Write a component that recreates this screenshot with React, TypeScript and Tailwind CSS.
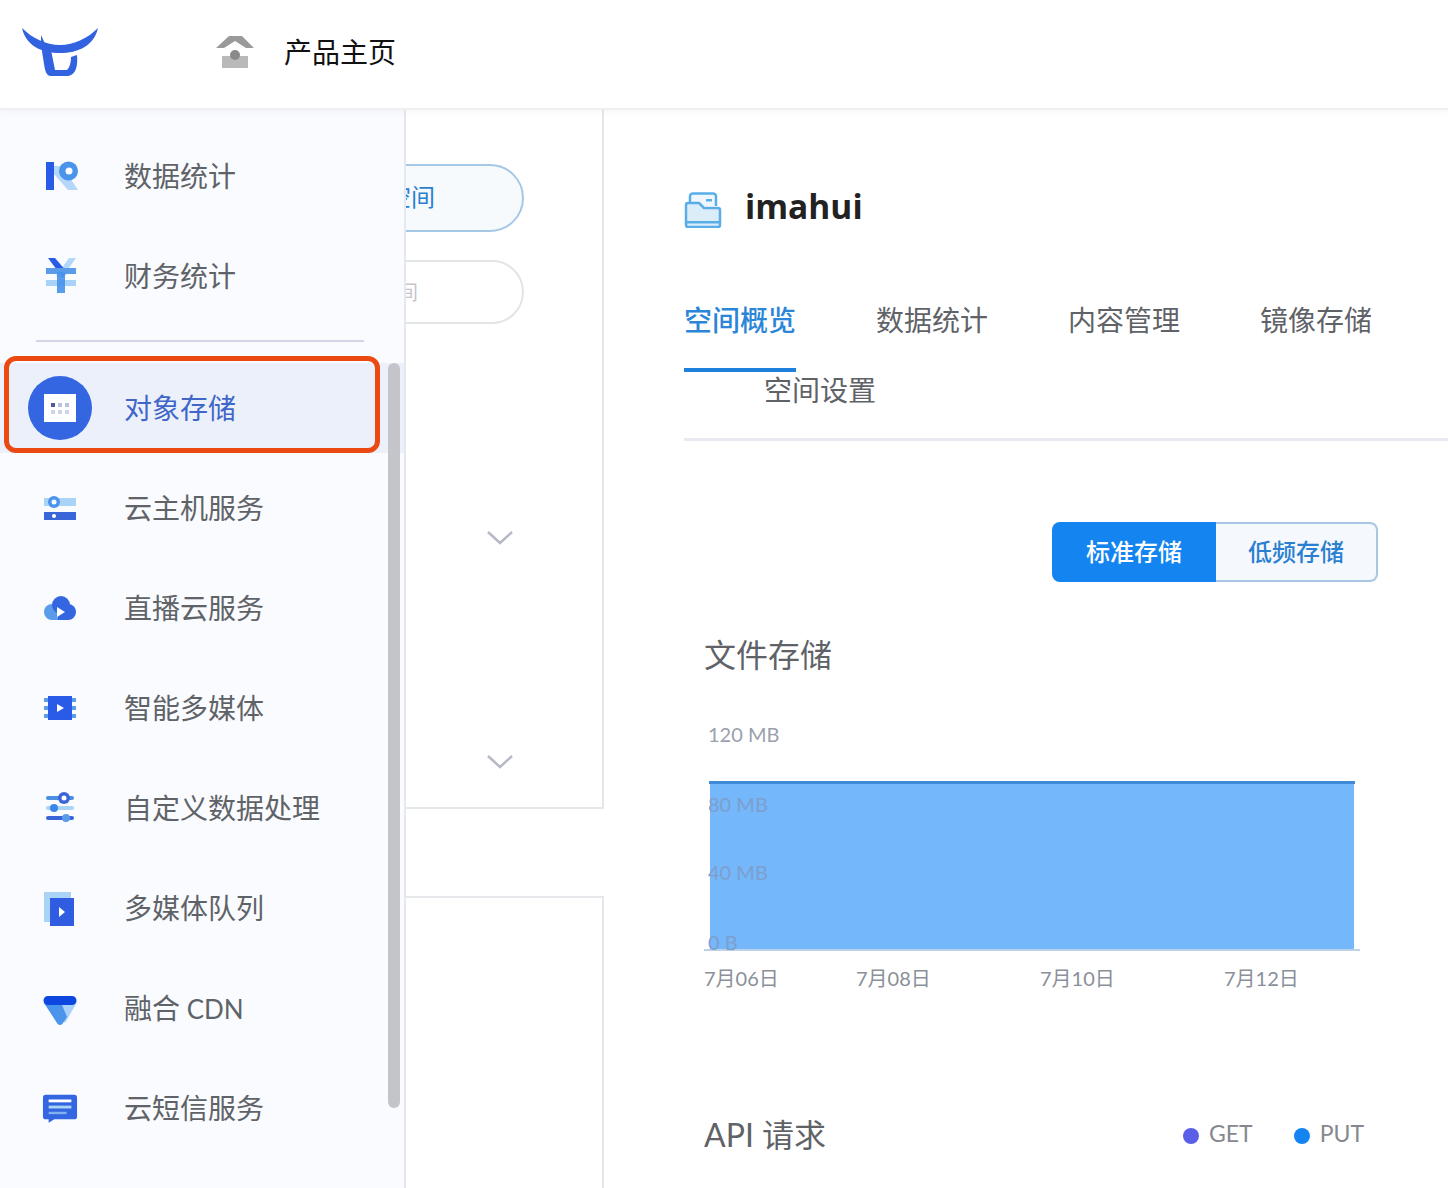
import React from "react";

const FONT = "[font-family:Lato,'Noto_Sans_CJK_SC',sans-serif]";

const Icons: Record<string, React.ReactNode> = {
  stats: (
    <svg width="36" height="36" viewBox="0 0 36 36">
      <path d="M12 8 L20 8 L36 32 L26 32 L12 16 Z" fill="#b5d7fa" />
      <rect x="4" y="4" width="8" height="28" fill="#2a5be8" />
      <circle cx="26.5" cy="13" r="9.5" fill="#4a94ec" />
      <circle cx="27" cy="13" r="3.5" fill="#f9fbfe" />
    </svg>
  ),
  money: (
    <svg width="36" height="36" viewBox="-2 0 36 36">
      <path d="M12 18 L25 0 L32 0 L18 20 Z" fill="#b5d7fa" />
      <path d="M4 0 L11 0 L23 14 L19 20 Z" fill="#2a5be8" />
      <rect x="2" y="10" width="30" height="6" fill="#5a9bea" />
      <rect x="2" y="22" width="30" height="6" fill="#a9d2fa" />
      <rect x="13" y="14" width="8" height="21" fill="#4a94ec" opacity="0.92" />
    </svg>
  ),
  server: (
    <svg width="36" height="36" viewBox="0 0 36 36">
      <rect x="2" y="8" width="32" height="8" fill="#aad4f6" />
      <circle cx="12" cy="12" r="6" fill="#4a94ec" />
      <circle cx="12" cy="12" r="2.5" fill="#f9fbfe" />
      <rect x="2" y="22" width="32" height="8" fill="#3a65d8" />
      <circle cx="12" cy="26" r="2" fill="#fff" />
    </svg>
  ),
  live: (
    <svg width="36" height="36" viewBox="0 0 36 36">
      <circle cx="10" cy="22" r="8" fill="#5a9bea" />
      <rect x="10" y="14" width="10" height="16" fill="#5a9bea" />
      <circle cx="19" cy="15" r="9" fill="#3366e0" />
      <circle cx="26" cy="22" r="8" fill="#3366e0" />
      <rect x="16" y="20" width="10" height="10" fill="#3366e0" />
      <path d="M15 17 L23 22 L15 27 Z" fill="#fff" />
    </svg>
  ),
  media: (
    <svg width="36" height="36" viewBox="0 0 36 36">
      <rect x="2" y="8" width="32" height="4" fill="#5a9bea" />
      <rect x="2" y="16" width="32" height="4" fill="#5a9bea" />
      <rect x="2" y="24" width="32" height="4" fill="#5a9bea" />
      <rect x="6" y="6" width="24" height="24" fill="#2a5be8" />
      <path d="M15 14 L22 18 L15 22 Z" fill="#fff" />
    </svg>
  ),
  sliders: (
    <svg width="36" height="36" viewBox="0 0 36 36">
      <rect x="4" y="6" width="28" height="4" rx="2" fill="#4a8fe0" />
      <rect x="4" y="16" width="28" height="4" rx="2" fill="#aad4f6" />
      <rect x="4" y="26" width="28" height="4" rx="2" fill="#3a65d8" />
      <circle cx="22" cy="8" r="6" fill="#3a65d8" />
      <circle cx="22" cy="8" r="2.5" fill="#fff" />
      <circle cx="12" cy="18" r="4" fill="#3b86e6" />
      <circle cx="24" cy="28" r="4" fill="#5a9bea" />
    </svg>
  ),
  queue: (
    <svg width="36" height="36" viewBox="0 0 36 36">
      <rect x="2" y="2" width="27" height="30" fill="#aad4f6" />
      <rect x="8" y="8" width="24" height="28" fill="#2f5ce0" />
      <path d="M17 17 L23 22 L17 27 Z" fill="#fff" />
    </svg>
  ),
  cdn: (
    <svg width="36" height="36" viewBox="0 0 36 36">
      <path d="M8 10 L31 10 C34 10 35 12 34 14 L23 33 Z" fill="#a9d2fa" />
      <path d="M2 13 C2 11 4 10 6 10 L18 10 L25 27 L21 33 C20 35.500 16 35.500 15 33 Z" fill="#4a94ec" />
      <path d="M6 6 L30 6 A4.500 4.500 0 0 1 30 15 L6 15 A4.500 4.500 0 0 1 6 6 Z" fill="#0d47e0" />
    </svg>
  ),
  sms: (
    <svg width="38" height="36" viewBox="0 0 38 36">
      <path d="M4 4 L34 4 A3 3 0 0 1 37 7 L37 27 A3 3 0 0 1 34 30 L13 30 L7 33.500 L7 30 L4 30 A3 3 0 0 1 1 27 L1 7 A3 3 0 0 1 4 4 Z" fill="#3366e0" />
      <rect x="7" y="9" width="24" height="3" fill="#fff" />
      <rect x="7" y="15.500" width="24" height="3" fill="#aad4f6" />
      <rect x="7" y="22" width="19" height="2.500" fill="#7fb2ee" />
    </svg>
  ),
};

function NavItem({ icon, label, extra }: { icon: string; label: string; extra?: string }) {
  return (
    <div className="flex h-[100px] items-center pl-[42px] text-[28px] text-[#5f6368]">
      <div className="flex h-9 w-9 shrink-0 items-center justify-center">{Icons[icon]}</div>
      <span className="ml-[46px]">
        {label}
        {extra ? <span className="text-[26px]"> {extra}</span> : null}
      </span>
    </div>
  );
}

function Chevron() {
  return (
    <svg width="28" height="16" viewBox="0 0 28 16" fill="none" stroke="#b4b9c3" strokeWidth="2.500">
      <path d="M2 2 L14 13 L26 2" />
    </svg>
  );
}

const tabs = ["数据统计", "内容管理", "镜像存储", "空间设置"];

export default function App() {
  return (
    <div className={`flex h-[1188px] w-[1448px] flex-col overflow-hidden bg-white ${FONT}`}>
      <header className="relative z-20 flex h-[110px] shrink-0 items-center border-b-2 border-[#eeeff1] bg-white pl-5 shadow-[0_2px_8px_rgba(0,0,0,0.04)]">
        <svg width="80" height="52" viewBox="0 0 80 52" className="-mt-[4px]">
          <path d="M2 2 C12 12 26 19 40 19 C54 19 68 12 78 2 C74 20 58 27 40 27 C22 27 6 20 2 2 Z" fill="#3362e0" />
          <path d="M21 9 L26 20 L21 20 Z" fill="#3362e0" />
          <path
            d="M21 19 L31 24 L35 44 L47 44 C50 41 51 36 51 31 L57 29 C58 40 56 49 48 50 L31 50 C26 50 25 44 24 38 Z"
            fill="#3362e0"
          />
        </svg>
        <svg width="38" height="34" viewBox="0 0 38 34" className="ml-[116px] -mt-[2px]">
          <rect x="6" y="20" width="26" height="12" fill="#b9b9b9" />
          <path d="M0 12 L13 0 L26 0 L38 12 L30 12 L19 5 L8 12 Z" fill="#9a9a9a" />
          <circle cx="19" cy="19" r="5" fill="#8a8a8a" />
        </svg>
        <span className="ml-[30px] -mt-[4px] text-[28px] text-[#111]">产品主页</span>
      </header>

      <div className="flex min-h-0 flex-1">
        <aside className="relative z-10 w-[406px] shrink-0 border-r-2 border-[#e6e8f0] bg-[#f9fbfe] pt-4">
          <NavItem icon="stats" label="数据统计" />
          <NavItem icon="money" label="财务统计" />
          <div className="mb-[21px] ml-9 mr-10 mt-[14px] h-[2px] bg-[#d2d5e3]" />
          <div className="mb-[5px] flex h-[90px] items-center bg-[#ebf0fb] pl-7 text-[28px] text-[#3f66c8]">
            <div className="flex h-16 w-16 items-center justify-center rounded-full bg-[#3366e0]">
              <div className="grid h-7 w-8 grid-cols-3 content-center justify-items-center gap-y-[3px] bg-white px-[5px]">
                <span className="h-1 w-1 bg-[#4a5aa0]" />
                <span className="h-1 w-1 bg-[#b8c2e0]" />
                <span className="h-1 w-1 bg-[#b8c2e0]" />
                <span className="h-1 w-1 bg-[#ccd4ea]" />
                <span className="h-1 w-1 bg-[#ccd4ea]" />
                <span className="h-1 w-1 bg-[#ccd4ea]" />
              </div>
            </div>
            <span className="ml-8">对象存储</span>
          </div>
          <NavItem icon="server" label="云主机服务" />
          <NavItem icon="live" label="直播云服务" />
          <NavItem icon="media" label="智能多媒体" />
          <NavItem icon="sliders" label="自定义数据处理" />
          <NavItem icon="queue" label="多媒体队列" />
          <NavItem icon="cdn" label="融合" extra="CDN" />
          <NavItem icon="sms" label="云短信服务" />
          <div className="absolute left-[388px] top-[253px] h-[745px] w-3 rounded-full bg-[#c4c5ca]" />
          <div className="absolute left-1 top-[246px] h-[97px] w-[376px] rounded-xl border-[5px] border-[#ea4a12]" />
        </aside>

        <div className="flex w-[198px] shrink-0 flex-col">
          <div className="flex h-[699px] shrink-0 flex-col border-b-2 border-r-2 border-[#e6e7ea]">
            <div className="-ml-[120px] mt-[54px] flex h-[68px] w-[238px] items-center justify-end rounded-full border-2 border-[#a6c8e6] bg-[#f6fafd] pb-[2px] pr-[87px] text-[24px] text-[#2b7fd0]">
              存储空间
            </div>
            <div className="-ml-[120px] mt-7 flex h-16 w-[238px] items-center justify-end rounded-full border-2 border-[#e3e4e8] pr-[104px] text-[20px] text-[#c4c6cc]">
              外部空间
            </div>
            <div className="ml-[80px] mt-[206px]"><Chevron /></div>
            <div className="ml-[80px] mt-[208px]"><Chevron /></div>
          </div>
          <div className="mt-[87px] flex-1 border-r-2 border-t-2 border-[#e6e7ea]" />
        </div>

        <main className="min-w-0 flex-1 pl-20">
          <div className="mt-[74px] flex h-11 items-center">
            <svg width="38" height="36" viewBox="0 0 38 36" className="mt-2">
              <path d="M6 14 L6 4 A3 3 0 0 1 9 1.500 L29 1.500 A3 3 0 0 1 32 4 L32 14" fill="#eef7fd" stroke="#5aaee8" strokeWidth="2.500" />
              <path d="M2 33 L2 13 A2 2 0 0 1 4 11 L15 11 L20 16 L34 16 A2 2 0 0 1 36 18 L36 33 A2 2 0 0 1 34 35 L4 35 A2 2 0 0 1 2 33 Z" fill="#dcedfa" stroke="#5aaee8" strokeWidth="2.500" strokeLinejoin="round" />
              <rect x="2" y="29" width="34" height="2.500" fill="#5aaee8" />
              <rect x="22" y="7" width="6" height="2.500" fill="#5aaee8" />
            </svg>
            <span className="ml-[23px] [font-family:'Open_Sans',sans-serif] text-[33.5px] font-bold text-[#222]">imahui</span>
          </div>

          <div className="mt-[57px] flex flex-wrap border-b-[3px] border-[#e9eaf1] pb-[13px] text-[28px] text-[#5f6368]">
            <div className="relative flex h-[70px] w-28 items-center justify-center font-medium text-[#2b86d8]">
              空间概览
              <div className="absolute -bottom-[17px] left-0 h-1 w-28 bg-[#1f80dc]" />
            </div>
            {tabs.map((t) => (
              <div key={t} className="ml-20 flex h-[70px] w-28 items-center justify-center">
                {t}
              </div>
            ))}
          </div>

          <div className="mt-[81px] flex h-[60px] w-[326px] translate-x-[368px] text-[24px]">
            <div className="flex w-[164px] items-center justify-center rounded-l-lg bg-[#1485f0] font-medium text-white">
              标准存储
            </div>
            <div className="flex flex-1 items-center justify-center rounded-r-lg border-2 border-l-0 border-[#a9c7e2] bg-[#f5f9fd] font-medium text-[#2b7fd0]">
              低频存储
            </div>
          </div>

          <h2 className="ml-5 mt-[50px] text-[32px] leading-[46px] text-[#5f6368]">文件存储</h2>

          <div className="relative ml-5 mt-[42px] h-[216px] w-[656px] text-[20px] leading-[28px] text-[#9aa0ad]">
            <svg width="656" height="176" viewBox="0 0 656 176" className="absolute left-0 top-[59px]">
              <rect x="6" y="4" width="644" height="168" fill="#74b7fa" />
              <rect x="5" y="2" width="646" height="3" fill="#3f8ad6" />
              <rect x="0" y="170" width="656" height="2" fill="#bcd2e8" />
            </svg>
            <span className="absolute left-1 top-0">120 MB</span>
            <span className="absolute left-1 top-[70px] text-[#7c9fcd]">80 MB</span>
            <span className="absolute left-1 top-[138px] text-[#7c9fcd]">40 MB</span>
            <span className="absolute left-1 top-[208px] text-[#7c9fcd]">0 B</span>
          </div>

          <div className="ml-5 mt-[28px] flex whitespace-nowrap text-[20px] leading-7 text-[#8a8f99]">
            <span className="w-[74px]">7月06日</span>
            <span className="ml-[78px] w-[74px]">7月08日</span>
            <span className="ml-[110px] w-[74px]">7月10日</span>
            <span className="ml-[110px] w-[74px]">7月12日</span>
          </div>

          <div className="ml-5 mt-[120px] flex w-[660px] items-center text-[#85888e]">
            <h2 className="text-[32px] leading-[46px] text-[#5f6368]">API 请求</h2>
            <span className="ml-auto mt-[2px] h-4 w-4 rounded-full bg-[#5b5fe8]" />
            <span className="ml-[10px] -mt-[3px] text-[23px]">GET</span>
            <span className="ml-[41px] mt-[2px] h-4 w-4 rounded-full bg-[#1485f0]" />
            <span className="ml-[10px] -mt-[3px] text-[23px]">PUT</span>
          </div>
        </main>
      </div>
    </div>
  );
}
